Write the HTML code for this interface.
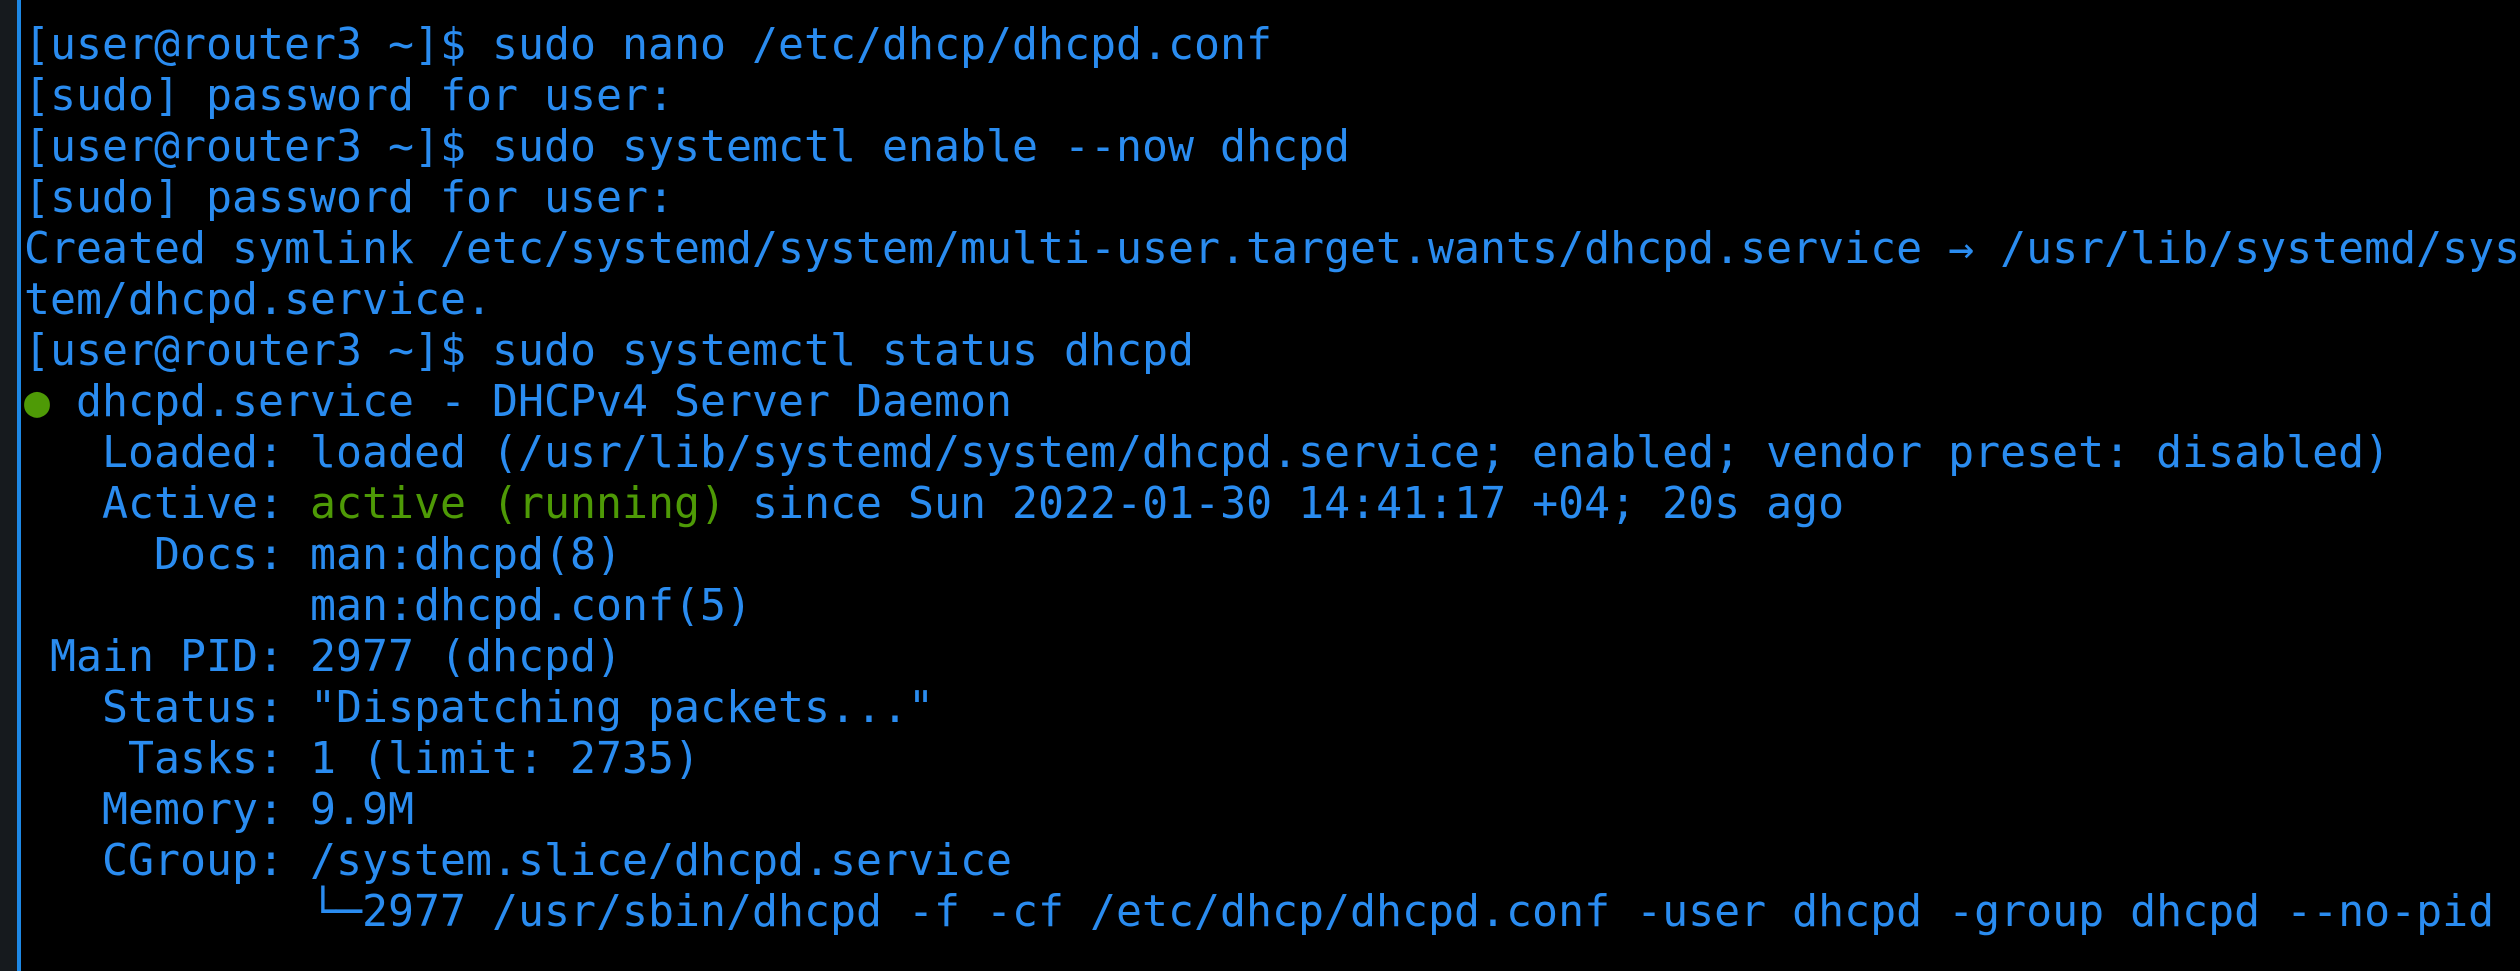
<!DOCTYPE html>
<html><head><meta charset="utf-8"><style>
html,body{margin:0;padding:0;background:#000;width:2520px;height:971px;overflow:hidden}
.strip{position:absolute;left:0;top:0;width:17px;height:971px;background:#161a1e}
.bar{position:absolute;left:17px;top:0;width:4px;height:971px;background:#1e88e5}
pre{position:absolute;left:24px;top:20px;margin:0;font-family:"DejaVu Sans Mono","Liberation Mono",monospace;font-size:43.2px;line-height:51px;color:#2a8cf0;white-space:pre}
.g{color:#4e9a06}
</style></head><body>
<div class="strip"></div><div class="bar"></div>
<pre>[user@router3 ~]$ sudo nano /etc/dhcp/dhcpd.conf
[sudo] password for user:
[user@router3 ~]$ sudo systemctl enable --now dhcpd
[sudo] password for user:
Created symlink /etc/systemd/system/multi-user.target.wants/dhcpd.service → /usr/lib/systemd/sys
tem/dhcpd.service.
[user@router3 ~]$ sudo systemctl status dhcpd
<span class="g">●</span> dhcpd.service - DHCPv4 Server Daemon
   Loaded: loaded (/usr/lib/systemd/system/dhcpd.service; enabled; vendor preset: disabled)
   Active: <span class="g">active (running)</span> since Sun 2022-01-30 14:41:17 +04; 20s ago
     Docs: man:dhcpd(8)
           man:dhcpd.conf(5)
 Main PID: 2977 (dhcpd)
   Status: "Dispatching packets..."
    Tasks: 1 (limit: 2735)
   Memory: 9.9M
   CGroup: /system.slice/dhcpd.service
           └─2977 /usr/sbin/dhcpd -f -cf /etc/dhcp/dhcpd.conf -user dhcpd -group dhcpd --no-pid</pre>
</body></html>
